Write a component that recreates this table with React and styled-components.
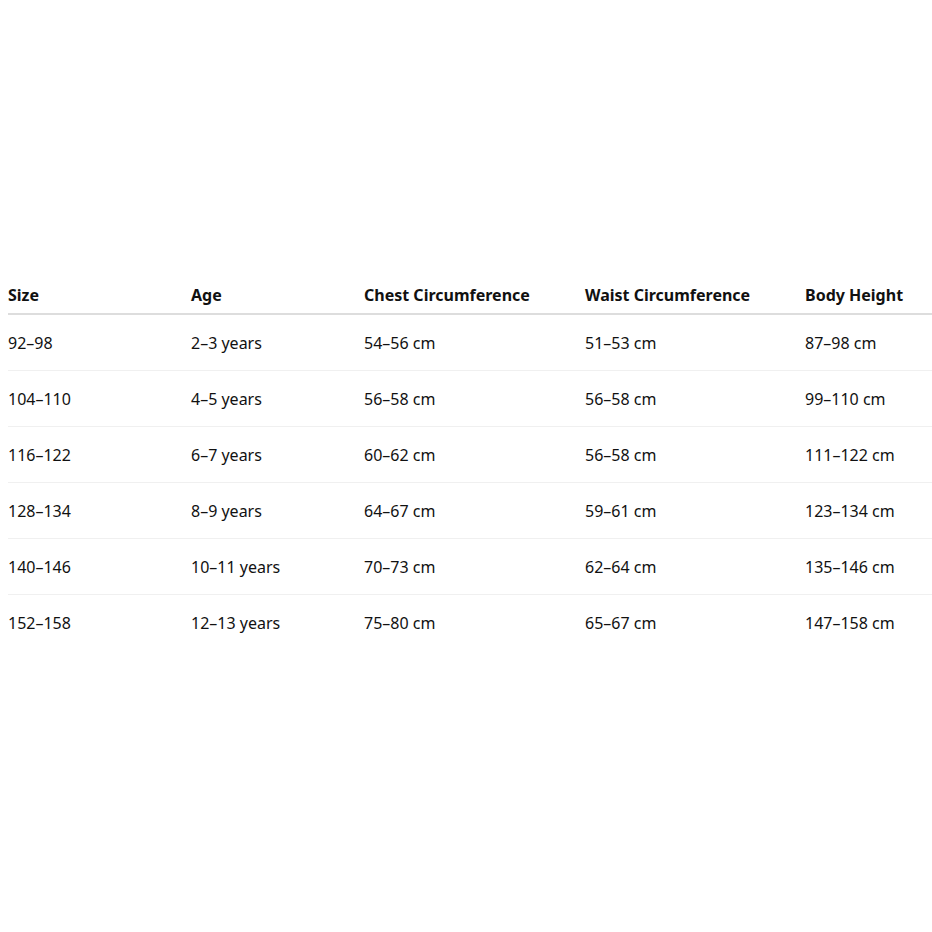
import styled, { createGlobalStyle } from "styled-components";

const GlobalStyle = createGlobalStyle`
  html, body {
    margin: 0;
    padding: 0;
    background: #ffffff;
    overflow: hidden;
  }
  body {
    font-family: "Noto Sans", "Open Sans", sans-serif;
    color: #111111;
  }
`;

const rows = [
  ["92–98", "2–3 years", "54–56 cm", "51–53 cm", "87–98 cm"],
  ["104–110", "4–5 years", "56–58 cm", "56–58 cm", "99–110 cm"],
  ["116–122", "6–7 years", "60–62 cm", "56–58 cm", "111–122 cm"],
  ["128–134", "8–9 years", "64–67 cm", "59–61 cm", "123–134 cm"],
  ["140–146", "10–11 years", "70–73 cm", "62–64 cm", "135–146 cm"],
  ["152–158", "12–13 years", "75–80 cm", "65–67 cm", "147–158 cm"],
];

const headers = ["Size", "Age", "Chest Circumference", "Waist Circumference", "Body Height"];
const widths = [183, 173, 221, 220, 127];

const Page = styled.div`
  padding: 272px 0 0 8px;
  width: 924px;
`;

const Table = styled.table`
  width: 924px;
  border-collapse: collapse;
  table-layout: fixed;
`;

const HeadCell = styled.th`
  text-align: left;
  font-weight: 700;
  font-size: 16px;
  line-height: 24px;
  padding: 11px 0 6px;
  border-bottom: 2px solid #dddddd;
  white-space: nowrap;
`;

const Row = styled.tr`
  border-bottom: 1px solid #f0f0f0;
  &:last-child {
    border-bottom: none;
  }
`;

const Cell = styled.td`
  font-size: 16px;
  line-height: 24px;
  padding: 16px 0 15px;
  white-space: nowrap;
`;

export default function App() {
  return (
    <>
      <GlobalStyle />
      <Page>
        <Table>
          <colgroup>
            {widths.map((w, i) => (
              <col key={i} style={{ width: w }} />
            ))}
          </colgroup>
          <thead>
            <tr>
              {headers.map((h) => (
                <HeadCell key={h}>{h}</HeadCell>
              ))}
            </tr>
          </thead>
          <tbody>
            {rows.map((r) => (
              <Row key={r[0]}>
                {r.map((c, i) => (
                  <Cell key={i}>{c}</Cell>
                ))}
              </Row>
            ))}
          </tbody>
        </Table>
      </Page>
    </>
  );
}
